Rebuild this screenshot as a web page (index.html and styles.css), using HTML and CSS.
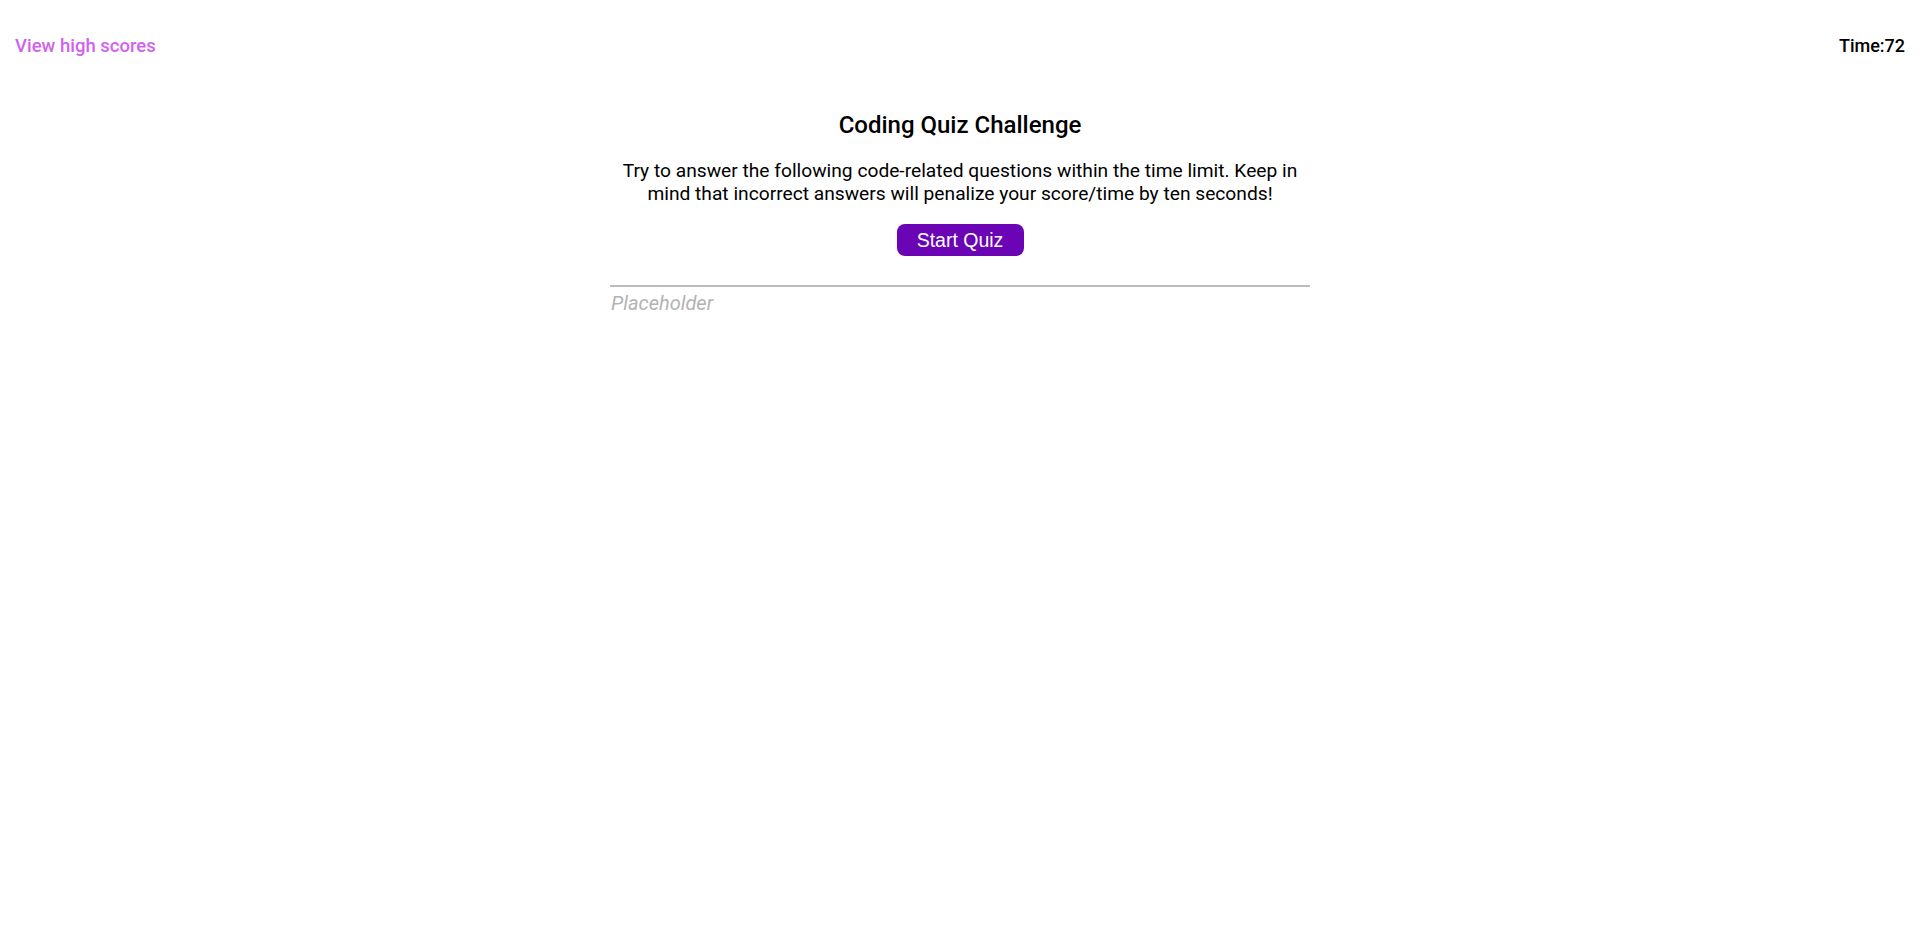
FILE: index.html
```html
<!DOCTYPE html>
<html>
<head>
<meta charset="utf-8">
<title>Coding Quiz</title>
<link rel="stylesheet" href="styles.css">
</head>
<body>
<header class="top">
  <a class="scores-link" href="#">View high scores</a>
  <div class="timer">Time:72</div>
</header>
<main class="quiz">
  <h1 class="title">Coding Quiz Challenge</h1>
  <p class="intro">Try to answer the following code-related questions within the time limit. Keep in mind that incorrect answers will penalize your score/time by ten seconds!</p>
  <button class="start-btn">Start Quiz</button>
  <div class="feedback">Placeholder</div>
</main>
</body>
</html>
```
FILE: styles.css
```css
html, body {
  margin: 0;
  padding: 0;
  background: #fff;
}
body {
  font-family: Roboto, "Liberation Sans", sans-serif;
  color: #000;
}
.top {
  display: flex;
  justify-content: space-between;
  align-items: baseline;
  padding: 35px 15px 0 15px;
  height: 21px;
}
.scores-link {
  color: #d35ff0;
  text-decoration: none;
  font-size: 18.5px;
  font-weight: 500;
  font-family: Roboto, sans-serif;
}
.timer {
  font-size: 18px;
  font-weight: 500;
  font-family: Roboto, sans-serif;
}
.quiz {
  width: 700px;
  margin: 0 auto;
  display: flex;
  flex-direction: column;
  align-items: center;
  text-align: center;
}
.title {
  font-size: 24px;
  font-weight: 500;
  margin: 55px 0 0 0;
  line-height: 28px;
}
.intro {
  font-size: 19.2px;
  line-height: 23px;
  margin: 20px 0 0 0;
}
.start-btn {
  margin-top: 19px;
  background: #6a04b5;
  color: #fff;
  border: none;
  border-radius: 8px;
  font-family: "Liberation Sans", Arial, sans-serif;
  font-size: 19.5px;
  width: 127px;
  height: 32px;
  padding: 0;
  cursor: pointer;
}
.feedback {
  align-self: stretch;
  margin-top: 29px;
  border-top: 2px solid #bdbdbd;
  text-align: left;
  font-style: italic;
  color: #b3b3b3;
  font-size: 20px;
  line-height: 23px;
  padding: 5px 0 0 1px;
}
```
